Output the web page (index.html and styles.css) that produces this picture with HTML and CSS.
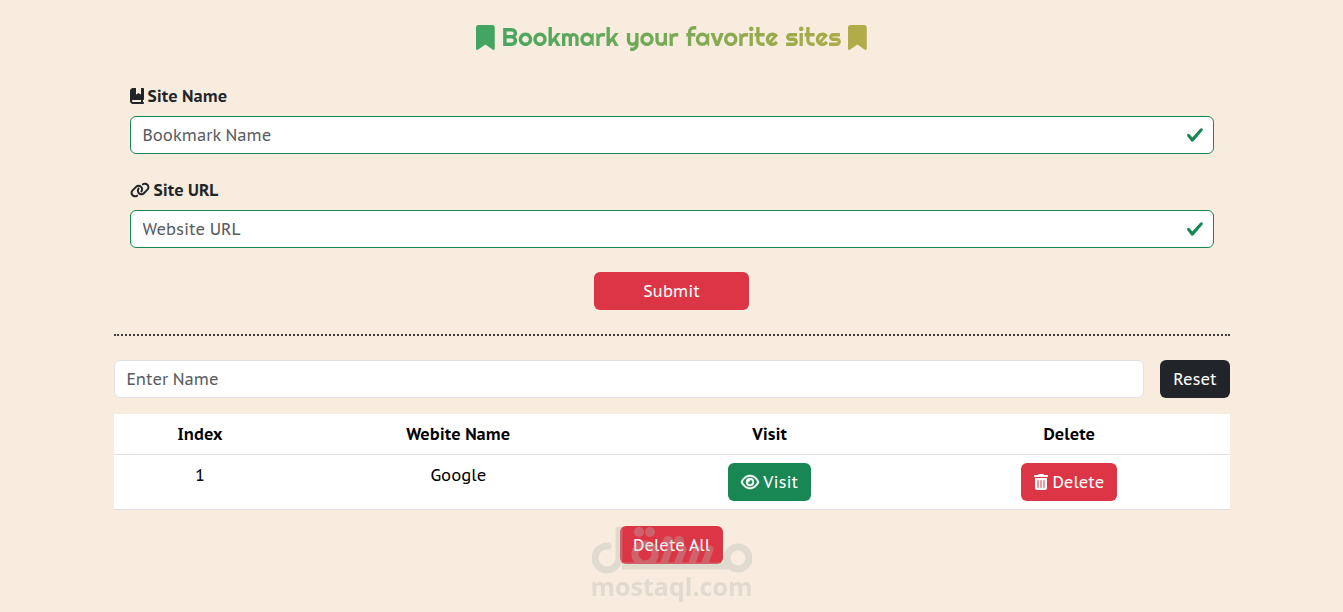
FILE: index.html
```html
<!DOCTYPE html>
<html lang="en">
<head>
<meta charset="utf-8">
<meta name="viewport" content="width=device-width, initial-scale=1">
<title>Bookmark your favorite sites</title>
<link rel="stylesheet" href="styles.css">
</head>
<body>
<main class="container">
  <h1 class="title">
    <svg class="title-icon" viewBox="0 0 384 512" aria-hidden="true"><path fill="#43a561" d="M0 48V487.700C0 501.100 10.900 512 24.300 512c5 0 9.900-1.500 14-4.400L192 400 345.700 507.600c4.100 2.900 9 4.400 14 4.400 13.400 0 24.300-10.900 24.300-24.300V48c0-26.500-21.500-48-48-48H48C21.500 0 0 21.500 0 48z"/></svg>
    <span class="title-text">Bookmark your favorite sites</span>
    <svg class="title-icon" viewBox="0 0 384 512" aria-hidden="true"><path fill="#b1ac49" d="M0 48V487.700C0 501.100 10.900 512 24.300 512c5 0 9.900-1.500 14-4.400L192 400 345.700 507.600c4.100 2.900 9 4.400 14 4.400 13.400 0 24.300-10.900 24.300-24.300V48c0-26.500-21.500-48-48-48H48C21.500 0 0 21.500 0 48z"/></svg>
  </h1>
  <form class="form">
    <div class="field">
      <label class="label" for="name">
        <svg class="icon-book" viewBox="0 0 448 512" aria-hidden="true"><path fill="currentColor" d="M0 96C0 43 43 0 96 0h96v190.700c0 13.400 15.500 20.900 26 12.500L272 160l54 43.200c10.500 8.400 26 .9 26-12.500V0h64c17.700 0 32 14.300 32 32v320c0 17.700-14.300 32-32 32v64c17.700 0 32 14.300 32 32s-14.300 32-32 32H96c-53 0-96-43-96-96V96zm64 320c0 17.700 14.300 32 32 32h256v-64H96c-17.700 0-32 14.300-32 32z"/></svg>
        Site Name
      </label>
      <div class="control">
        <input class="input valid" id="name" type="text" placeholder="Bookmark Name">
        <svg class="check" viewBox="0 0 8 8" aria-hidden="true"><path fill="#198754" d="M2.300 6.730.600 4.530c-.400-1.040.460-1.400 1.100-.800l1.100 1.400 3.400-3.800c.600-.630 1.600-.270 1.200.700l-4 4.600c-.430.500-.800.400-1.100.100z"/></svg>
      </div>
    </div>
    <div class="field">
      <label class="label" for="url">
        <svg class="icon-link" viewBox="0 0 640 512" aria-hidden="true"><path fill="currentColor" d="M579.800 267.700c56.500-56.500 56.500-148 0-204.500-50-50-128.800-56.500-186.300-15.400l-1.600 1.100c-14.400 10.300-17.700 30.300-7.400 44.600s30.300 17.700 44.600 7.400l1.600-1.100c32.100-22.900 76-19.300 103.800 8.600 31.500 31.500 31.500 82.500 0 114L422.300 334.800c-31.500 31.500-82.500 31.500-114 0-27.900-27.900-31.500-71.800-8.600-103.800l1.100-1.600c10.300-14.400 6.900-34.400-7.400-44.600s-34.400-6.900-44.600 7.400l-1.100 1.600C206.500 251.200 213 330 263 380c56.500 56.500 148 56.500 204.500 0L579.800 267.700zM60.200 244.300c-56.500 56.500-56.500 148 0 204.500 50 50 128.800 56.500 186.300 15.400l1.600-1.100c14.400-10.300 17.700-30.300 7.400-44.600s-30.300-17.700-44.600-7.400l-1.600 1.100c-32.100 22.900-76 19.300-103.800-8.600C74 372 74 321 105.500 289.500L217.700 177.200c31.500-31.500 82.500-31.500 114 0 27.900 27.900 31.500 71.800 8.600 103.900l-1.100 1.600c-10.300 14.400-6.900 34.400 7.400 44.600s34.400 6.900 44.600-7.400l1.100-1.600C433.500 260.800 427 182 377 132c-56.500-56.500-148-56.500-204.500 0L60.200 244.300z"/></svg>
        Site URL
      </label>
      <div class="control">
        <input class="input valid" id="url" type="text" placeholder="Website URL">
        <svg class="check" viewBox="0 0 8 8" aria-hidden="true"><path fill="#198754" d="M2.300 6.730.600 4.530c-.400-1.040.460-1.400 1.100-.800l1.100 1.400 3.400-3.800c.600-.630 1.600-.270 1.200.700l-4 4.600c-.430.500-.800.400-1.100.100z"/></svg>
      </div>
    </div>
    <button class="btn danger submit" type="button">Submit</button>
  </form>
  <hr class="divider">
  <div class="search">
    <input class="input" type="search" placeholder="Enter Name" aria-label="Enter Name">
    <button class="btn dark" type="button">Reset</button>
  </div>
  <table class="table">
    <colgroup><col class="col-index"><col class="col-name"><col class="col-visit"><col class="col-delete"></colgroup>
    <thead><tr><th>Index</th><th>Webite Name</th><th>Visit</th><th>Delete</th></tr></thead>
    <tbody>
      <tr>
        <td>1</td>
        <td>Google</td>
        <td><button class="btn success" type="button"><svg class="icon-eye" viewBox="0 0 576 512" aria-hidden="true"><path fill="currentColor" stroke="currentColor" stroke-width="16" d="M288 80c-65.200 0-118.800 29.600-159.900 67.700C89.600 183.500 63 226 49.400 256c13.600 30 40.200 72.500 78.600 108.300C169.200 402.400 222.800 432 288 432s118.800-29.600 159.900-67.700C486.400 328.500 513 286 526.600 256c-13.600-30-40.200-72.500-78.600-108.300C406.800 109.600 353.200 80 288 80zM95.400 112.600C142.500 68.800 207.200 32 288 32s145.500 36.800 192.600 80.600c46.800 43.500 78.100 95.400 93 131.100 3.300 7.900 3.300 16.700 0 24.600-14.900 35.700-46.200 87.700-93 131.100C433.500 443.200 368.800 480 288 480s-145.500-36.800-192.600-80.600C48.600 356 17.300 304 2.500 268.300c-3.300-7.900-3.300-16.700 0-24.600C17.300 208 48.600 156 95.400 112.600zM288 336c44.200 0 80-35.800 80-80s-35.800-80-80-80c-.7 0-1.300 0-2 0 1.300 5.100 2 10.500 2 16 0 35.300-28.700 64-64 64-5.500 0-10.900-.7-16-2 0 .7 0 1.300 0 2 0 44.200 35.800 80 80 80zm0-208a128 128 0 1 1 0 256 128 128 0 1 1 0-256z"/></svg>Visit</button></td>
        <td><button class="btn danger" type="button"><svg class="icon-trash" viewBox="0 0 448 512" aria-hidden="true"><path fill="currentColor" d="M135.200 17.700C140.600 6.800 151.700 0 163.800 0h120.400c12.100 0 23.200 6.800 28.600 17.700L320 32h96c17.700 0 32 14.300 32 32s-14.300 32-32 32H32C14.300 96 0 81.700 0 64s14.300-32 32-32h96l7.200-14.300zM32 128h384v320c0 35.300-28.700 64-64 64H96c-35.300 0-64-28.700-64-64V128zm96 64c-8.800 0-16 7.200-16 16v224c0 8.800 7.200 16 16 16s16-7.200 16-16V208c0-8.800-7.200-16-16-16zm96 0c-8.800 0-16 7.200-16 16v224c0 8.800 7.200 16 16 16s16-7.200 16-16V208c0-8.800-7.200-16-16-16zm96 0c-8.800 0-16 7.200-16 16v224c0 8.800 7.200 16 16 16s16-7.200 16-16V208c0-8.800-7.200-16-16-16z"/></svg>Delete</button></td>
      </tr>
    </tbody>
  </table>
  <div class="footer">
    <button class="btn danger" type="button">Delete All</button>
    <div class="watermark">
      <svg class="mark" viewBox="0 0 160 48" aria-hidden="true">
        <g fill="none" stroke="#b9b9b3" stroke-width="7">
          <path stroke-linecap="round" d="M16 20A12 12 0 1 0 27 32V4"/>
          <path d="M30 40H137"/>
          <circle cx="146" cy="32" r="11"/>
          <circle cx="53" cy="28" r="10"/>
          <path d="M72 37L77 23M86 37L91 23M100 37L105 23M113 37L118 23" stroke-linecap="round"/>
        </g>
        <g fill="#b9b9b3"><circle cx="47" cy="6" r="5"/><circle cx="58" cy="6" r="5"/><circle cx="76" cy="15" r="5"/><circle cx="87" cy="15" r="5"/></g>
      </svg>
      <span class="mark-text">mostaql.com</span>
    </div>
  </div>
</main>
</body>
</html>
```
FILE: styles.css
```css
*, *::before, *::after { box-sizing: border-box; }

body {
  margin: 0;
  background: #f8ecde;
  color: #212529;
  font: 16px/24px "PT Sans Caption", "Noto Sans", sans-serif;
}

.container {
  max-width: 1116px;
  margin: 0 auto;
  padding-top: 20px;
}

.title {
  display: flex;
  align-items: center;
  justify-content: center;
  gap: 7px;
  margin: 0;
  font: 600 25px/34px "Righteous", Lato, sans-serif;
}

.title-icon { height: 25px; }

.title-text {
  background: linear-gradient(to right, #48a660, #acac4a);
  background-clip: text;
  -webkit-background-clip: text;
  color: transparent;
}

.form {
  display: flex;
  flex-direction: column;
  gap: 24px;
  padding: 30px 16px 24px;
}

.field { display: grid; gap: 8px; }

.label {
  display: flex;
  align-items: center;
  gap: 4px;
  font-weight: 700;
}

.icon-book, .icon-trash { width: 14px; height: 16px; }
.icon-link { width: 20px; height: 16px; }
.icon-eye { width: 18px; height: 16px; overflow: visible; }

.control { position: relative; }

.input {
  display: block;
  width: 100%;
  height: 38px;
  padding: 6px 12px;
  border: 1px solid #dee2e6;
  border-radius: 6px;
  background: #fff;
  color: #212529;
  font: inherit;
}

.input::placeholder { color: #595c5f; opacity: 1; }
.valid { border-color: #198754; padding-right: 36px; }

.check {
  position: absolute;
  top: 10px;
  right: 10px;
  width: 18px;
  height: 18px;
}

.btn {
  display: inline-flex;
  align-items: center;
  justify-content: center;
  gap: 4px;
  height: 38px;
  padding: 6px 13px;
  border: 0;
  border-radius: 6px;
  color: #fff;
  font: inherit;
}

.danger { background: #dc3545; }
.success { background: #198754; }
.dark { background: #212529; }
.submit { align-self: center; width: 155px; }

.divider {
  margin: 0 0 24px;
  border: 0;
  border-top: 2px dotted #413c3b;
}

.search { display: flex; gap: 16px; }
.search .input { flex: 1; }

.table {
  width: 100%;
  margin: 16px 0;
  border-collapse: separate;
  border-spacing: 0;
  table-layout: fixed;
  background: #fff;
  color: #000;
  text-align: center;
}

.table th, .table td {
  padding: 8px;
  border-bottom: 1px solid #dee2e6;
  vertical-align: top;
}

.table .btn { vertical-align: top; }
.col-index { width: 15.5%; }
.col-name { width: 30.8%; }
.col-visit { width: 25%; }
.col-delete { width: 28.7%; }

.footer {
  position: relative;
  display: flex;
  justify-content: center;
  padding-bottom: 40px;
}

.watermark {
  position: absolute;
  top: 0;
  left: 50%;
  display: flex;
  flex-direction: column;
  align-items: center;
  width: 160px;
  transform: translateX(-50%);
  opacity: 0.35;
  color: #b9b9b3;
  pointer-events: none;
}

.mark { width: 160px; height: 48px; }
.mark-text { font: 700 25px/24px "Open Sans", sans-serif; }
```
